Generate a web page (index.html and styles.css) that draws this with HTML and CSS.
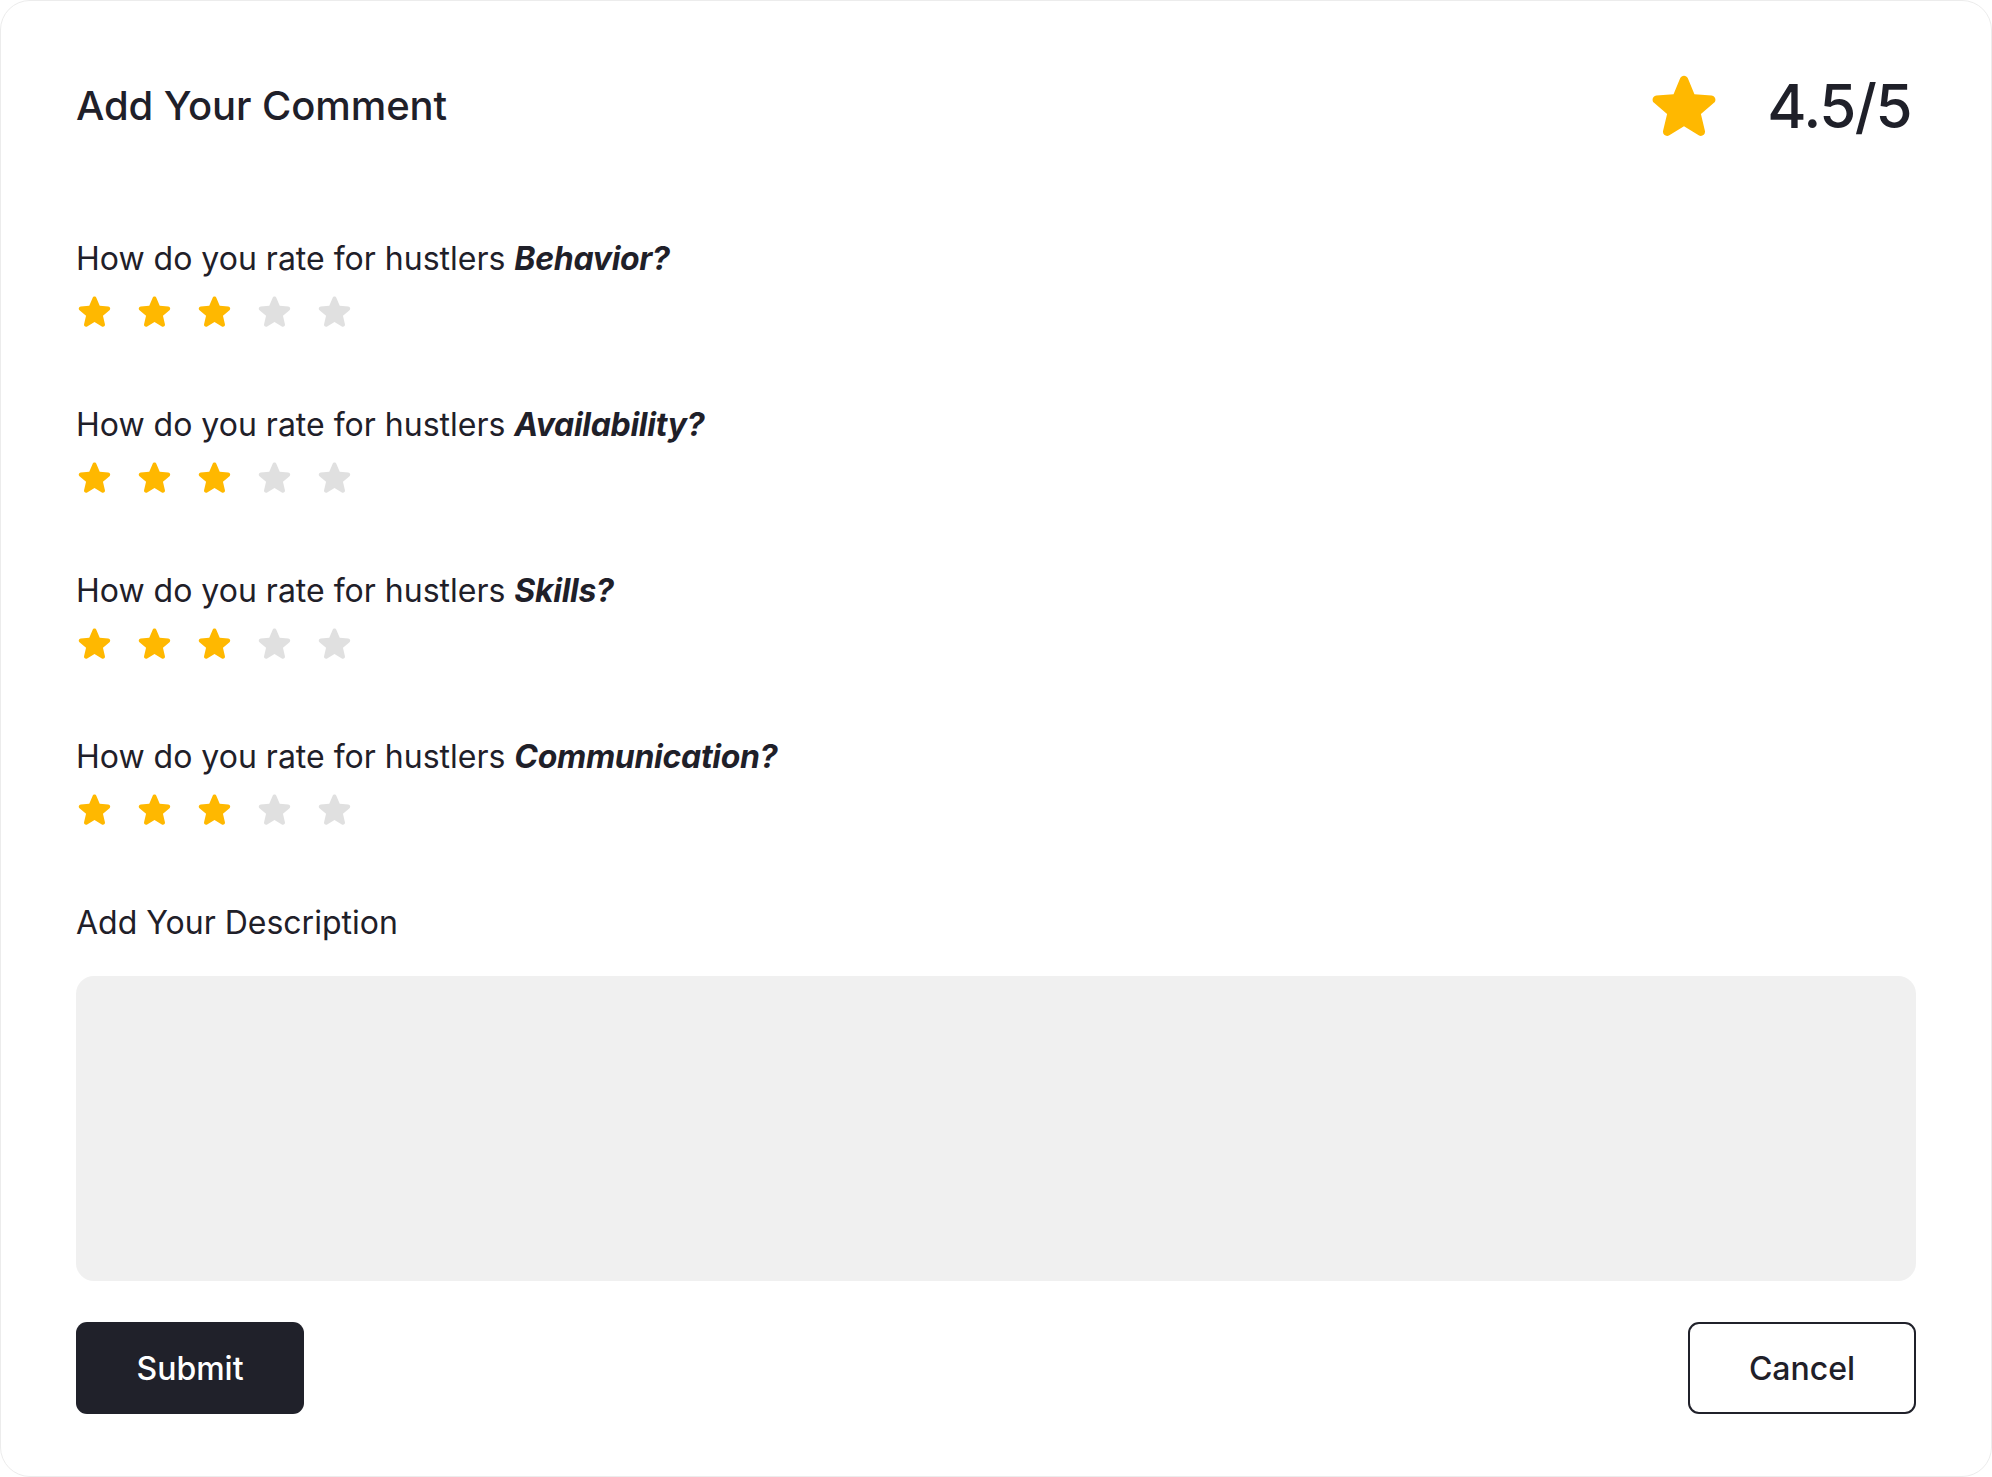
FILE: index.html
```html
<!DOCTYPE html>
<html lang="en">
<head>
<meta charset="utf-8">
<title>Add Your Comment</title>
<link rel="stylesheet" href="styles.css">
</head>
<body>
<svg width="0" height="0" class="defs" aria-hidden="true">
  <defs>
    <symbol id="star" viewBox="1.6 2.3 20.8 19.6">
      <path d="M10.788 3.21c.448-1.077 1.976-1.077 2.424 0l2.082 5.006 5.404.434c1.164.093 1.636 1.545.749 2.305l-4.117 3.527 1.257 5.273c.271 1.136-.964 2.033-1.960 1.425L12 18.354 7.373 21.18c-.996.608-2.231-.29-1.960-1.425l1.257-5.273-4.117-3.527c-.887-.76-.415-2.212.749-2.305l5.404-.434 2.082-5.005Z"/>
    </symbol>
  </defs>
</svg>
<main class="card">
  <header class="head">
    <h1 class="title">Add Your Comment</h1>
    <div class="score">
      <svg class="big-star"><use href="#star"/></svg>
      <span class="score-text">4.5/5</span>
    </div>
  </header>

  <section class="questions">
    <div class="q">
      <p class="q-label">How do you rate for hustlers <b>Behavior?</b></p>
      <div class="stars">
        <svg class="s on"><use href="#star"/></svg>
        <svg class="s on"><use href="#star"/></svg>
        <svg class="s on"><use href="#star"/></svg>
        <svg class="s off"><use href="#star"/></svg>
        <svg class="s off"><use href="#star"/></svg>
      </div>
    </div>
    <div class="q">
      <p class="q-label">How do you rate for hustlers <b>Availability?</b></p>
      <div class="stars">
        <svg class="s on"><use href="#star"/></svg>
        <svg class="s on"><use href="#star"/></svg>
        <svg class="s on"><use href="#star"/></svg>
        <svg class="s off"><use href="#star"/></svg>
        <svg class="s off"><use href="#star"/></svg>
      </div>
    </div>
    <div class="q">
      <p class="q-label">How do you rate for hustlers <b>Skills?</b></p>
      <div class="stars">
        <svg class="s on"><use href="#star"/></svg>
        <svg class="s on"><use href="#star"/></svg>
        <svg class="s on"><use href="#star"/></svg>
        <svg class="s off"><use href="#star"/></svg>
        <svg class="s off"><use href="#star"/></svg>
      </div>
    </div>
    <div class="q">
      <p class="q-label">How do you rate for hustlers <b>Communication?</b></p>
      <div class="stars">
        <svg class="s on"><use href="#star"/></svg>
        <svg class="s on"><use href="#star"/></svg>
        <svg class="s on"><use href="#star"/></svg>
        <svg class="s off"><use href="#star"/></svg>
        <svg class="s off"><use href="#star"/></svg>
      </div>
    </div>
  </section>

  <section class="desc">
    <label class="desc-label" for="desc">Add Your Description</label>
    <textarea id="desc" class="desc-box"></textarea>
  </section>

  <footer class="actions">
    <button class="btn btn-primary" type="button">Submit</button>
    <button class="btn btn-outline" type="button">Cancel</button>
  </footer>
</main>
</body>
</html>
```

FILE: styles.css
```css
* { box-sizing: border-box; }

html, body {
  margin: 0;
  padding: 0;
  background: #ffffff;
}

body {
  font-family: "Inter", "Noto Sans", "Liberation Sans", sans-serif;
  color: #1f2029;
}

.defs {
  position: absolute;
  width: 0;
  height: 0;
  overflow: hidden;
}

.card {
  width: 1992px;
  height: 1477px;
  border: 1px solid #ececec;
  border-radius: 30px;
  background: #ffffff;
  padding: 73px 75px 0 75px;
  display: flex;
  flex-direction: column;
}

.head {
  display: flex;
  align-items: center;
  justify-content: space-between;
  height: 64px;
}

.title {
  margin: 0;
  font-size: 40px;
  font-weight: 500;
  line-height: 48px;
  letter-spacing: -0.1px;
}

.score {
  display: flex;
  align-items: center;
  gap: 50px;
  padding-right: 5px;
}

.big-star {
  width: 66px;
  height: 63px;
  fill: #ffb800;
}

.score-text {
  font-size: 60px;
  font-weight: 500;
  line-height: 64px;
  letter-spacing: -1.5px;
}

.questions {
  margin-top: 101px;
  display: flex;
  flex-direction: column;
  gap: 77px;
}

.q {
  display: flex;
  flex-direction: column;
  gap: 17px;
}

.q-label {
  margin: 0;
  font-size: 32px;
  line-height: 40px;
  font-weight: 400;
}

.q-label b {
  font-weight: 700;
  font-style: italic;
  letter-spacing: -0.3px;
}

.stars {
  display: flex;
  gap: 27px;
  padding-left: 2px;
}

.s {
  width: 33px;
  height: 32px;
}

.s.on { fill: #ffb800; }
.s.off { fill: #e0e0e0; }

.desc {
  margin-top: 77px;
  display: flex;
  flex-direction: column;
  gap: 33px;
}

.desc-label {
  font-size: 32px;
  line-height: 40px;
  font-weight: 400;
}

.desc-box {
  display: block;
  width: 100%;
  height: 305px;
  border: none;
  border-radius: 18px;
  background: #f0f0f0;
  resize: none;
  outline: none;
  font-family: inherit;
  font-size: 28px;
  padding: 24px;
}

.actions {
  margin-top: 41px;
  display: flex;
  justify-content: space-between;
}

.btn {
  width: 228px;
  height: 92px;
  border-radius: 11px;
  font-family: inherit;
  font-size: 32px;
  font-weight: 500;
  cursor: pointer;
}

.btn-primary {
  background: #20212a;
  color: #ffffff;
  border: none;
}

.btn-outline {
  background: #ffffff;
  color: #1f2029;
  border: 2px solid #20212a;
}
```
